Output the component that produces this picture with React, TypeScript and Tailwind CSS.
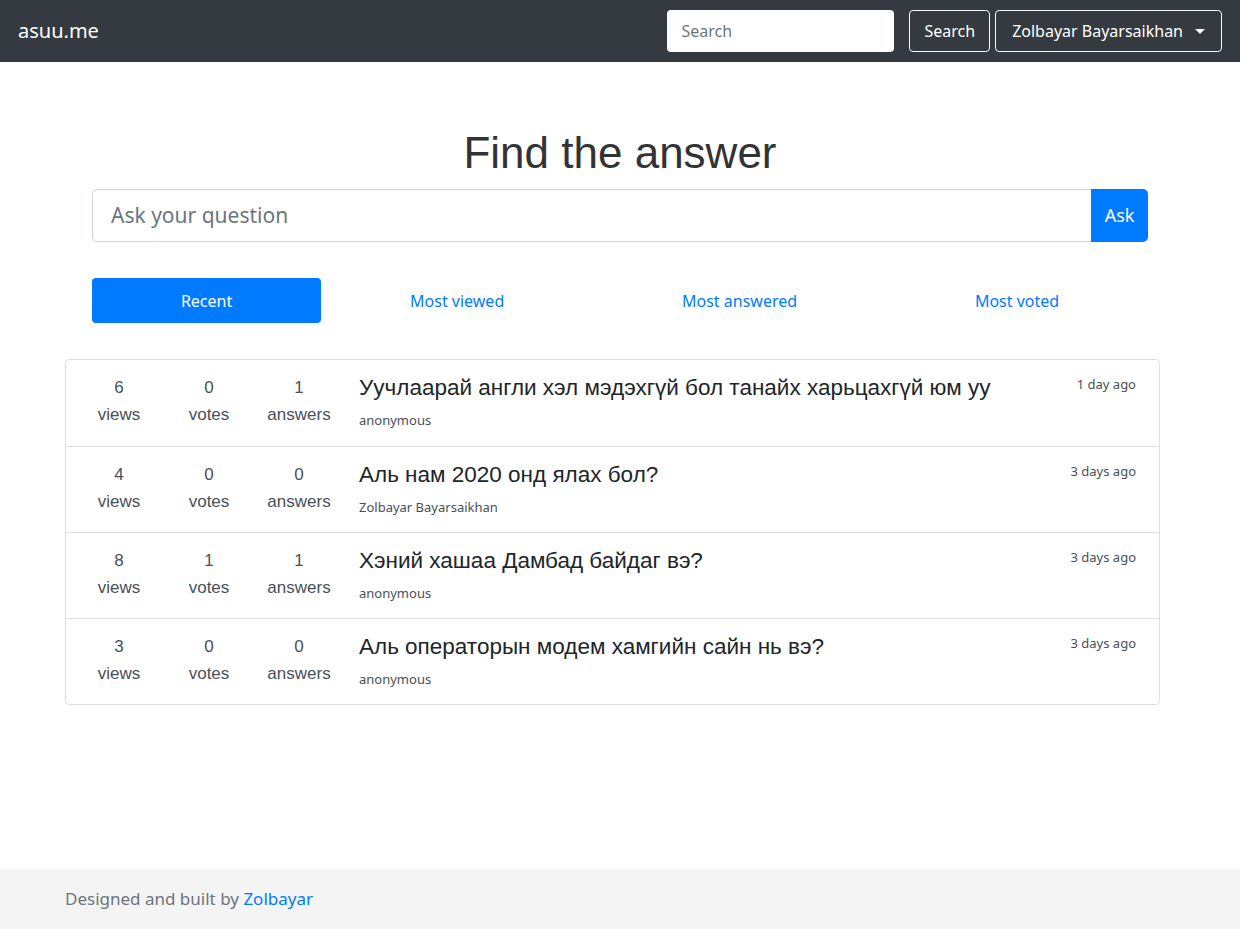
import React from "react";

const ui = { fontFamily: '"Noto Sans", "Open Sans", sans-serif' };
const arial = { fontFamily: '"Liberation Sans", Arial, sans-serif' };

type Question = {
  views: number;
  votes: number;
  answers: number;
  title: string;
  author: string;
  time: string;
};

const questions: Question[] = [
  { views: 6, votes: 0, answers: 1, title: "Уучлаарай англи хэл мэдэхгүй бол танайх харьцахгүй юм уу", author: "anonymous", time: "1 day ago" },
  { views: 4, votes: 0, answers: 0, title: "Аль нам 2020 онд ялах бол?", author: "Zolbayar Bayarsaikhan", time: "3 days ago" },
  { views: 8, votes: 1, answers: 1, title: "Хэний хашаа Дамбад байдаг вэ?", author: "anonymous", time: "3 days ago" },
  { views: 3, votes: 0, answers: 0, title: "Аль операторын модем хамгийн сайн нь вэ?", author: "anonymous", time: "3 days ago" },
];

const tabs = ["Recent", "Most viewed", "Most answered", "Most voted"];

function Stat({ value, label }: { value: number; label: string }) {
  return (
    <div className="w-[90px] text-center text-[17px] leading-[27px] text-[#495057]" style={arial}>
      <div>{value}</div>
      <div>{label}</div>
    </div>
  );
}

export default function App() {
  return (
    <div className="flex flex-col bg-white text-[#212529]" style={ui}>
      {/* Navbar */}
      <nav className="h-[62px] bg-[#343a40] flex items-center justify-between pl-[18px] pr-[18px]">
        <span className="text-white text-[20px]">asuu.me</span>
        <div className="flex items-center">
          <input
            placeholder="Search"
            className="w-[227px] h-[42px] rounded-[4px] bg-white px-[14px] text-[16px] placeholder:text-[#6c757d] outline-none"
            style={ui}
          />
          <button className="ml-[15px] h-[42px] px-[14px] border border-[#f8f9fa] rounded-[4px] text-white text-[16px]">
            Search
          </button>
          <button className="ml-[5px] h-[42px] px-[16px] border border-[#f8f9fa] rounded-[4px] text-white text-[16px] flex items-center gap-[12px]">
            Zolbayar Bayarsaikhan
            <span className="w-0 h-0 border-l-[5px] border-r-[5px] border-t-[5px] border-l-transparent border-r-transparent border-t-white" />
          </button>
        </div>
      </nav>

      {/* Hero */}
      <main className="pb-[164px]">
        <h1 className="text-center text-[44px] leading-[52px] text-[#333] mt-[65px]" style={arial}>
          Find the answer
        </h1>
        <div className="mx-[92px] mt-[10px] flex h-[53px]">
          <input
            placeholder="Ask your question"
            className="flex-1 border border-[#ced4da] border-r-0 rounded-l-[5px] px-[18px] text-[21px] placeholder:text-[#6c757d] outline-none"
            style={ui}
          />
          <button className="w-[57px] bg-[#007bff] text-white text-[18px] rounded-r-[5px]">Ask</button>
        </div>

        <div className="mx-[92px] mt-[36px] flex h-[45px]">
          {tabs.map((t, i) => (
            <div
              key={t}
              className={
                i === 0
                  ? "flex-auto px-4 flex items-center justify-center rounded-[4px] bg-[#007bff] text-white text-[16px]"
                  : "flex-auto px-4 flex items-center justify-center text-[#007bff] text-[16px]"
              }
            >
              {t}
            </div>
          ))}
        </div>

        {/* Question list */}
        <div className="ml-[65px] mr-[80px] mt-[36px] border border-[#dfdfdf] rounded-[4px]">
          {questions.map((q, i) => (
            <div
              key={i}
              className={
                "flex h-[86px] pl-[8px] pr-[23px] pt-[14px] " +
                (i > 0 ? "border-t border-[#dfdfdf]" : "")
              }
            >
              <Stat value={q.views} label="views" />
              <Stat value={q.votes} label="votes" />
              <Stat value={q.answers} label="answers" />
              <div className="flex-1 pl-[15px]">
                <div className="text-[22.5px] leading-[28px] text-[#212529]" style={arial}>
                  {q.title}
                </div>
                <div className="mt-[9px] text-[13px] text-[#495057]">{q.author}</div>
              </div>
              <div className="text-[13px] text-[#495057] pt-[1px]">{q.time}</div>
            </div>
          ))}
        </div>
      </main>

      {/* Footer */}
      <footer className="h-[60px] bg-[#f4f4f4] flex items-center pl-[65px] text-[17px] text-[#6c757d]">
        <span>
          Designed and built by <a className="text-[#007bff]">Zolbayar</a>
        </span>
      </footer>
    </div>
  );
}
